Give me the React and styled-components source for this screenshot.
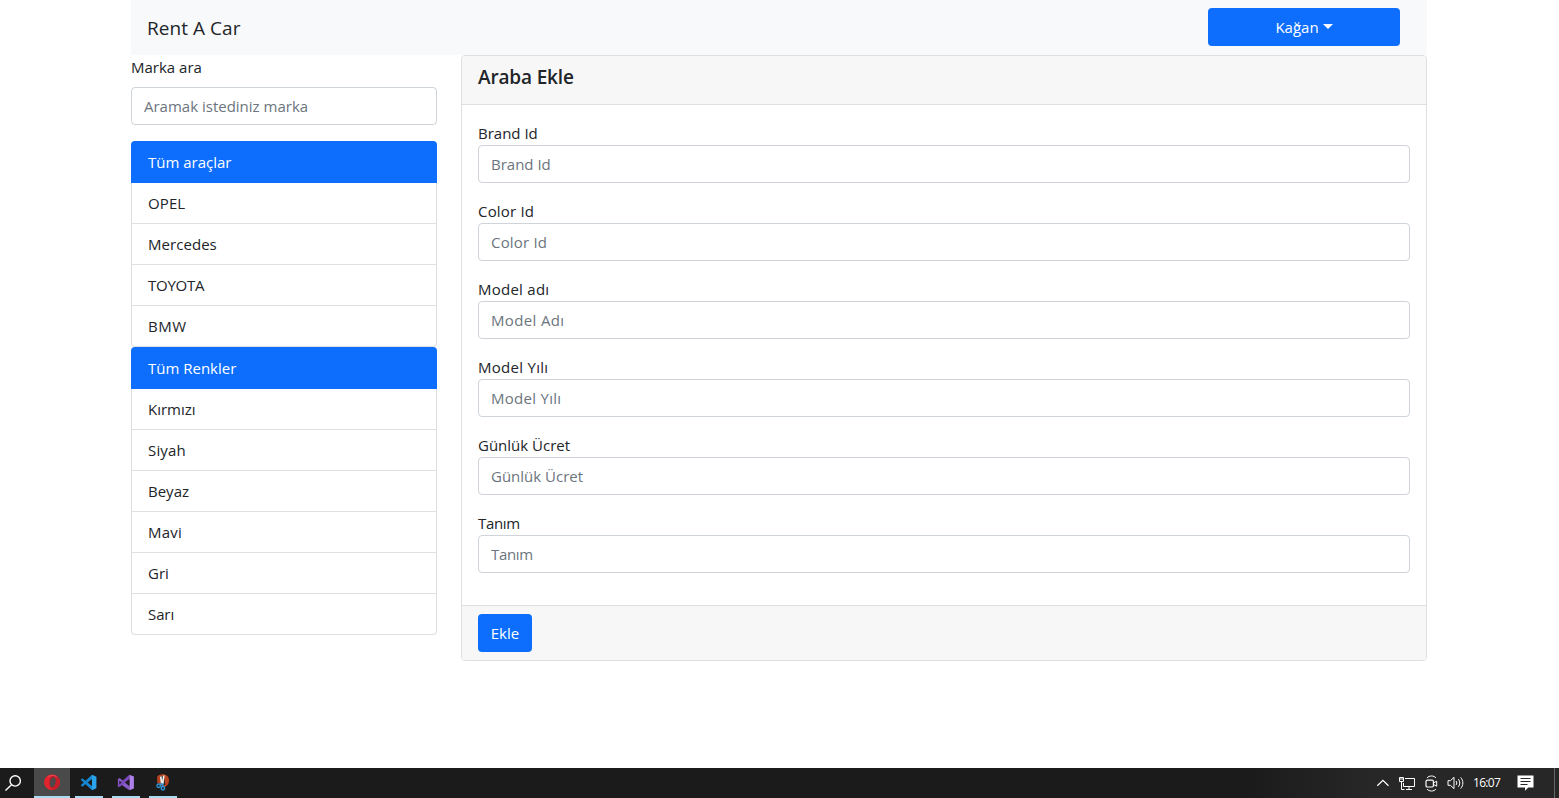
import React from "react";
import styled, { createGlobalStyle } from "styled-components";

const Global = createGlobalStyle`
  *, *::before, *::after { box-sizing: border-box; }
  body {
    margin: 0;
    background: #fff;
    color: #212529;
    font-family: "Open Sans", "Noto Sans", sans-serif;
    font-size: 15px;
    line-height: 24px;
    overflow: hidden;
  }
`;

const Page = styled.div`
  height: 798px;
  display: flex;
  flex-direction: column;
`;

const Container = styled.div`
  flex: 1;
  width: 1296px;
  margin-left: 131px;
`;

const Navbar = styled.nav`
  height: 55px;
  padding: 0 27px 1px 16px;
  display: flex;
  align-items: center;
  justify-content: space-between;
  background: #f8f9fa;
`;

const Text = styled.span`
  letter-spacing: ${(p) => p.$ls || 0}px;
`;

const Brand = styled.a`
  font-size: 19px;
  line-height: 30px;
  padding-top: 1px;
  letter-spacing: 0.05px;
`;

const Button = styled.button`
  height: 38px;
  width: ${(p) => p.$width}px;
  padding: 0 0 1px;
  display: flex;
  align-items: center;
  justify-content: center;
  gap: 4px;
  border: 0;
  border-radius: 4px;
  background: #0d6efd;
  color: #fff;
  font: inherit;
`;

const Caret = styled.i`
  border-top: 5px solid #fff;
  border-left: 5px solid transparent;
  border-right: 5px solid transparent;
  margin-top: -1px;
`;

const Columns = styled.div`
  display: grid;
  grid-template-columns: 306px 966px;
  column-gap: 24px;
  align-items: start;
`;

const Sidebar = styled.aside`
  display: flex;
  flex-direction: column;
`;

const Label = styled.label`
  display: block;
  height: 24px;
  letter-spacing: ${(p) => p.$ls || 0}px;
`;

const Input = styled.input`
  display: block;
  width: 100%;
  height: 38px;
  padding: 0 12px;
  border: 1px solid #ced4da;
  border-radius: 4px;
  background: #fff;
  color: #212529;
  font: inherit;
  letter-spacing: ${(p) => p.$ls || 0}px;
  &::placeholder { color: #6c757d; opacity: 1; }
`;

const Search = styled.div`
  display: flex;
  flex-direction: column;
  gap: 8px;
  margin-bottom: 16px;
`;

const List = styled.ul`
  list-style: none;
  margin: 0;
  padding: 0;
`;

const Item = styled.li`
  height: 41px;
  padding: 8px 16px;
  border: 1px solid #dfdfdf;
  border-top: 0;
  &:last-child { border-radius: 0 0 4px 4px; }
`;

const ActiveItem = styled.li`
  height: 42px;
  padding: 9px 17px;
  border-radius: 4px 4px 0 0;
  background: #0d6efd;
  color: #fff;
`;

const Card = styled.section`
  border: 1px solid #dfdfdf;
  border-radius: 4px;
  overflow: hidden;
`;

const CardHeader = styled.header`
  height: 49px;
  padding: 8px 16px;
  background: #f7f7f7;
  border-bottom: 1px solid #dfdfdf;
`;

const CardTitle = styled.h5`
  margin: 0;
  padding-top: 1px;
  font-size: 19px;
  font-weight: 600;
  line-height: 24px;
  letter-spacing: -0.15px;
`;

const CardBody = styled.div`
  padding: 16px 16px 32px;
  display: flex;
  flex-direction: column;
  gap: 16px;
`;

const CardFooter = styled.footer`
  height: 55px;
  padding: 8px 16px;
  background: #f7f7f7;
  border-top: 1px solid #dfdfdf;
`;

const Taskbar = styled.footer`
  height: 30px;
  display: flex;
  justify-content: space-between;
  background: linear-gradient(90deg, #1b1b1b 0 80%, #272727 88%);
  color: #fff;
`;

const Apps = styled.div`
  display: flex;
  align-items: stretch;
`;

const TaskButton = styled.div`
  width: ${(p) => p.$width}px;
  margin-right: ${(p) => p.$gap || 0}px;
  display: flex;
  align-items: center;
  justify-content: center;
  background: ${(p) => (p.$active ? "#4a4a4a" : "transparent")};
  border-bottom: ${(p) => (p.$open ? "2px solid #a9dcf2" : "0")};
`;

const Tray = styled.div`
  display: flex;
  align-items: center;
`;

const Slot = styled.div`
  width: ${(p) => p.$width}px;
  display: flex;
  align-items: center;
`;

const Clock = styled.time`
  width: 44px;
  font-size: 12px;
  line-height: 30px;
  letter-spacing: -0.7px;
`;

const ShowDesktop = styled.div`
  width: 5px;
  height: 30px;
  border-left: 1px solid #696969;
`;

const SearchIcon = () => (
  <svg width="18" height="18" viewBox="0 0 18 18" fill="none" stroke="#fff" strokeWidth="1.4">
    <circle cx="11.2" cy="6.9" r="5.2" />
    <path d="M7.5 10.7 1.5 16.5" />
  </svg>
);

const OperaIcon = () => (
  <svg width="18" height="18" viewBox="0 0 18 18">
    <ellipse cx="9" cy="9.3" rx="8" ry="7.8" fill="#e3242e" />
    <path d="M11 1.8a8 7.8 0 0 1 0 15c-3-.4-5-3.5-5-7.5s2-7.1 5-7.5Z" fill="#c41f29" />
    <ellipse cx="9.8" cy="9.2" rx="2.7" ry="4.8" fill="#4a4a4a" transform="rotate(12 9.8 9.2)" />
    <path d="M5.5 4.2C7.6 1.8 11.5 1.8 13.8 4.2" stroke="#f4535b" fill="none" />
  </svg>
);

const CodeIcon = () => (
  <svg width="19" height="17" viewBox="1 0 19 17">
    <path d="M1.7 5.7 3.3 4.3 13 12v4.2Z" fill="#1787cf" />
    <path d="M13 .8V5L3.3 12.7 1.7 11.3Z" fill="#1687d1" />
    <path d="M13 .8 17.4 2.7v11.6L13 16.2Z" fill="#2ba4ee" />
  </svg>
);

const StudioIcon = () => (
  <svg width="19" height="17" viewBox="0 0 19 17">
    <path d="M.9 5 2.7 4.1 12.4 12.2v4.1L2.7 9.6 1.9 12.8.9 12.4Z" fill="#8b5acb" />
    <path d="M.9 12.3 2.7 13 12.4 4.8V.7L.9 10.8Z" fill="#7b49bd" />
    <path d="M12.4.7 16.9 2.5v12l-4.5 1.8Z" fill="#ad80ea" />
    <path d="M2.4 6.6v3.9l2.1-2ZM12.4 5.8v5.4L9.2 8.5Z" fill="#1b1b1b" />
  </svg>
);

const SnipIcon = () => (
  <svg width="16" height="18" viewBox="0 0 16 18">
    <path d="M2.2 3.6C6-.4 13.8 1 14 7.3c.1 4-2.3 6.3-5.2 6.9L2.2 9.4Z" fill="#b8431f" />
    <path d="M5 3.5 8.8 3 10.4 12l-3 .6Z" fill="#272727" />
    <path d="m5.7 3.5 1.2 7.8M8.8 2.5 7.6 11.3" stroke="#f1f1f1" strokeWidth="1.7" />
    <g fill="none" stroke="#2d91d2" strokeWidth="1.5">
      <circle cx="3.7" cy="12.8" r="1.7" />
      <circle cx="7.9" cy="15.2" r="1.7" />
      <path d="m5 11.8 2-1.4M7.8 13.4l-.4-3" />
    </g>
  </svg>
);

const ChevronIcon = () => (
  <svg width="14" height="8" viewBox="0 0 14 8" fill="none" stroke="#fff" strokeWidth="1.2">
    <path d="m1.3 6.8 5.6-5.5 5.6 5.5" />
  </svg>
);

const NetworkIcon = () => (
  <svg width="17" height="15" viewBox="0 0 17 15" fill="none" stroke="#fff">
    <path d="M6 2.5h9.5v8H4.5V7M7 13.5h6M10 10.5v3M.5 1.5h4v4h-4ZM2.5 5.5v8h3" />
    <path d="M1 3h3" />
  </svg>
);

const MeetIcon = () => (
  <svg width="13" height="17" viewBox="0 0 13 17" fill="none" stroke="#fff">
    <path d="M2 3C4 .3 9 .3 11 3M2 14c2 2.7 7 2.7 9 0" />
    <rect x="1" y="5.2" width="7.4" height="6.8" rx="1.2" strokeWidth="1.2" />
    <path d="m8.7 7.8 3-1.6v5l-3-1.6" />
  </svg>
);

const SpeakerIcon = () => (
  <svg width="18" height="14" viewBox="0 0 18 14" fill="none" stroke="#fff">
    <path d="M1 4.7h2.4L7 1.3v11.4L3.4 9.3H1Z" />
    <path d="M9 5c1 1.2 1 2.8 0 4M11.3 3.2c2 2.3 2 5.3 0 7.6M13.6 1.4c3 3.3 3 7.9 0 11.2" />
  </svg>
);

const MessageIcon = () => (
  <svg width="17" height="16" viewBox="0 0 17 16">
    <path d="M.5.5h16v12h-5.2L8 15.7V12.5H.5Z" fill="#fff" />
    <path d="M3.5 3.5h10M3.5 6.5h10M3.5 9.5h7" stroke="#272727" />
  </svg>
);

const brands = [["OPEL", 0.1], ["Mercedes", 0.05], ["TOYOTA", -0.25], ["BMW", 0.5]];
const colors = [["Kırmızı", 0], ["Siyah", 0.15], ["Beyaz", 0], ["Mavi", 0.25], ["Gri", 0], ["Sarı", -0.1]];
const fields = [
  { label: "Brand Id", hint: "Brand Id", labelSpacing: 0, hintSpacing: 0 },
  { label: "Color Id", hint: "Color Id", labelSpacing: 0.18, hintSpacing: 0.18 },
  { label: "Model adı", hint: "Model Adı", labelSpacing: 0.25, hintSpacing: 0.35 },
  { label: "Model Yılı", hint: "Model Yılı", labelSpacing: 0.28, hintSpacing: 0.28 },
  { label: "Günlük Ücret", hint: "Günlük Ücret", labelSpacing: 0, hintSpacing: 0 },
  { label: "Tanım", hint: "Tanım", labelSpacing: -0.35, hintSpacing: -0.35 },
];

const Group = ({ title, items }) => (
  <List>
    <ActiveItem>{title}</ActiveItem>
    {items.map(([name, spacing]) => (
      <Item key={name}><Text $ls={spacing}>{name}</Text></Item>
    ))}
  </List>
);

export default function App() {
  return (
    <Page>
      <Global />
      <Container>
        <Navbar>
          <Brand>Rent A Car</Brand>
          <Button $width={192}>Kağan<Caret /></Button>
        </Navbar>
        <Columns>
          <Sidebar>
            <Search>
              <Label htmlFor="search">Marka ara</Label>
              <Input id="search" placeholder="Aramak istediniz marka" />
            </Search>
            <Group title="Tüm araçlar" items={brands} />
            <Group title="Tüm Renkler" items={colors} />
          </Sidebar>
          <Card>
            <CardHeader><CardTitle>Araba Ekle</CardTitle></CardHeader>
            <CardBody>
              {fields.map((f) => (
                <div key={f.label}>
                  <Label $ls={f.labelSpacing}>{f.label}</Label>
                  <Input $ls={f.hintSpacing} placeholder={f.hint} />
                </div>
              ))}
            </CardBody>
            <CardFooter><Button $width={54}>Ekle</Button></CardFooter>
          </Card>
        </Columns>
      </Container>
      <Taskbar>
        <Apps>
          <TaskButton $width={26} $gap={8}><SearchIcon /></TaskButton>
          <TaskButton $width={36} $gap={5} $active $open><OperaIcon /></TaskButton>
          <TaskButton $width={28} $gap={9} $open><CodeIcon /></TaskButton>
          <TaskButton $width={28} $gap={9} $open><StudioIcon /></TaskButton>
          <TaskButton $width={28} $open><SnipIcon /></TaskButton>
        </Apps>
        <Tray>
          <Slot $width={23}><ChevronIcon /></Slot>
          <Slot $width={26}><NetworkIcon /></Slot>
          <Slot $width={22}><MeetIcon /></Slot>
          <Slot $width={26}><SpeakerIcon /></Slot>
          <Clock>16:07</Clock>
          <Slot $width={37}><MessageIcon /></Slot>
          <ShowDesktop />
        </Tray>
      </Taskbar>
    </Page>
  );
}
